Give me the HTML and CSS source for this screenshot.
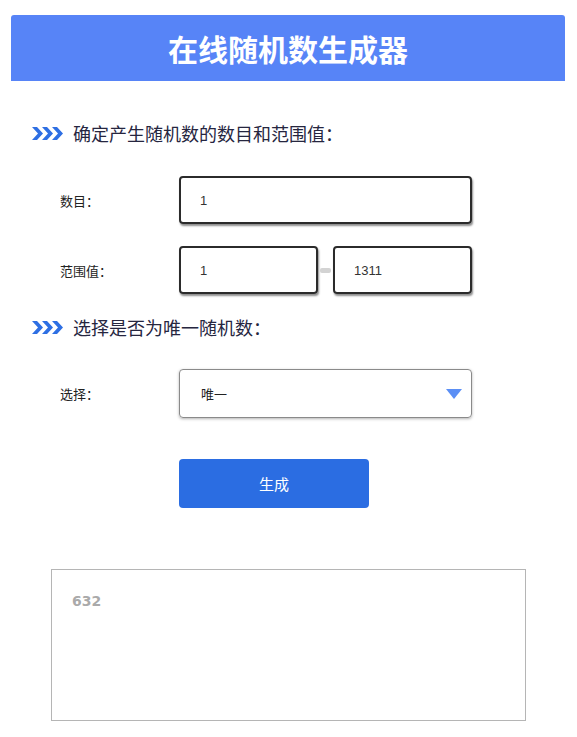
FILE: index.html
```html
<!DOCTYPE html>
<html lang="zh">
<head>
<meta charset="utf-8">
<title>在线随机数生成器</title>
<link rel="stylesheet" href="styles.css">
</head>
<body>
<div class="page">
  <header class="banner"><h1>在线随机数生成器</h1></header>

  <h2 class="sec">
    <svg class="chev" width="31" height="13" viewBox="0 0 31 13"><path d="M0 0h5l6 6.5-6 6.5H0l6-6.5z M10 0h5l6 6.5-6 6.5h-5l6-6.5z M20 0h5l6 6.5-6 6.5h-5l6-6.5z" fill="#2e6fe3"/></svg>
    <span>确定产生随机数的数目和范围值：</span>
  </h2>

  <div class="row r1">
    <label class="lbl">数目：</label>
    <div class="field wide">1</div>
  </div>
  <div class="row r2">
    <label class="lbl">范围值：</label>
    <div class="range">
      <div class="field half">1</div>
      <span class="dash"></span>
      <div class="field half">1311</div>
    </div>
  </div>

  <h2 class="sec sec2">
    <svg class="chev" width="31" height="13" viewBox="0 0 31 13"><path d="M0 0h5l6 6.5-6 6.5H0l6-6.5z M10 0h5l6 6.5-6 6.5h-5l6-6.5z M20 0h5l6 6.5-6 6.5h-5l6-6.5z" fill="#2e6fe3"/></svg>
    <span>选择是否为唯一随机数：</span>
  </h2>

  <div class="row r3">
    <label class="lbl">选择：</label>
    <div class="select">唯一<span class="tri"></span></div>
  </div>

  <div class="btnrow"><button class="btn">生成</button></div>

  <div class="result">632</div>
</div>
</body>
</html>
```

FILE: styles.css
```css
* { box-sizing: border-box; }
body {
  margin: 0;
  background: #fff;
  font-family: "Microsoft YaHei", "Noto Sans CJK SC", sans-serif;
  color: #333;
}
.page {
  width: 554px;
  margin-left: 11px;
  padding-top: 15px;
}
.banner {
  height: 66px;
  background: #5784f7;
  border-radius: 3px 3px 0 0;
  display: flex;
  align-items: center;
  justify-content: center;
}
.banner h1 {
  margin: 0;
  color: #fff;
  font-size: 30px;
  font-weight: bold;
  letter-spacing: 0;
  line-height: 1;
}
.sec {
  margin: 40px 0 0 21px;
  height: 24px;
  display: flex;
  align-items: center;
  font-size: 18px;
  font-weight: normal;
  color: #26263f;
}
.sec .chev { margin-right: 10px; }
.sec2 { margin-top: 21px; }
.row {
  display: flex;
  align-items: center;
  font-size: 13px;
}
.lbl {
  width: 168px;
  padding-left: 49px;
  color: #222;
}
.r1 { margin-top: 31px; }
.r2 { margin-top: 22px; }
.r3 { margin-top: 30px; }
.field {
  height: 48px;
  border: 2px solid #2b2b2b;
  border-radius: 4px;
  box-shadow: 1px 2px 2px rgba(0,0,0,0.45);
  display: flex;
  align-items: center;
  padding-left: 19px;
  font-family: "Liberation Sans", Arial, sans-serif;
  font-size: 13px;
  color: #333;
}
.wide { width: 293px; }
.range { display: flex; align-items: center; }
.half { width: 139px; }
.dash {
  width: 11px;
  height: 5px;
  margin: 0 2px;
  border-radius: 2px;
  background: #d3d3d3;
}
.select {
  position: relative;
  width: 293px;
  height: 49px;
  border: 1px solid #8a8a8a;
  border-radius: 4px;
  box-shadow: 0 1px 3px rgba(0,0,0,0.3);
  display: flex;
  align-items: center;
  padding-left: 21px;
  font-size: 13px;
  color: #222;
}
.tri {
  position: absolute;
  right: 9px;
  top: 19px;
  width: 0;
  height: 0;
  border-left: 8px solid transparent;
  border-right: 8px solid transparent;
  border-top: 10px solid #5b8ff5;
}
.btnrow {
  margin-top: 41px;
  padding-left: 168px;
}
.btn {
  width: 190px;
  height: 49px;
  border: none;
  border-radius: 4px;
  background: #2b6de2;
  color: #fff;
  font-family: "Microsoft YaHei", "Noto Sans CJK SC", sans-serif;
  font-size: 15px;
}
.result {
  margin: 61px 0 0 40px;
  width: 475px;
  height: 152px;
  border: 1px solid #b5b5b5;
  padding: 23px 0 0 20px;
  font-family: "DejaVu Sans", Verdana, sans-serif;
  font-weight: bold;
  font-size: 14px;
  color: #aaa;
}
```
